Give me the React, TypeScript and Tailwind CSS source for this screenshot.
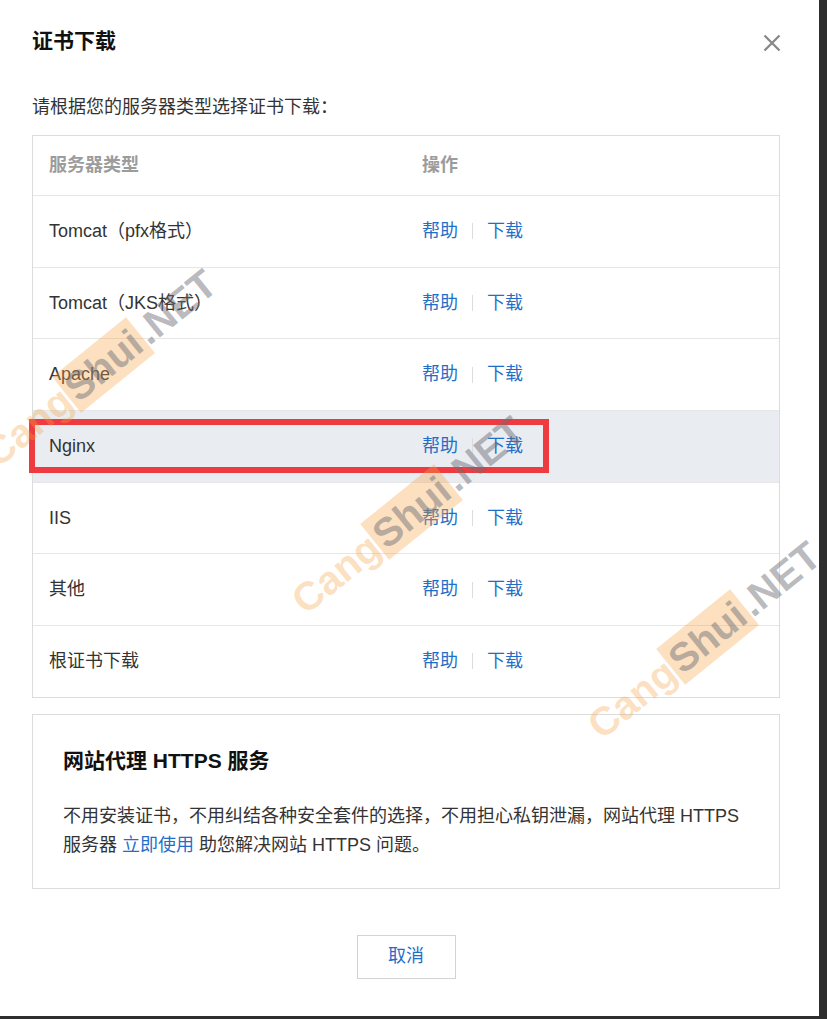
import React from 'react'

const servers = [
  'Tomcat（pfx格式）',
  'Tomcat（JKS格式）',
  'Apache',
  'Nginx',
  'IIS',
  '其他',
  '根证书下载'
]

// semi-transparent site watermark laid over the dialog
const Watermark: React.FC<{ className: string }> = ({ className }) => (
  <div
    className={`pointer-events-none absolute z-10 flex -translate-x-1/2 -translate-y-1/2 -rotate-[39deg] items-center whitespace-nowrap font-['Liberation_Sans',sans-serif] text-[40px] leading-none font-bold ${className}`}
  >
    <span className="text-[rgba(245,160,60,0.33)]">Cang</span>
    <span className="bg-[rgba(245,165,70,0.34)] px-[4px] py-[3px] text-[rgba(110,110,120,0.48)]">Shui</span>
    <span className="text-[rgba(110,110,120,0.48)]">.NET</span>
  </div>
)

const Actions = () => (
  <div className="flex items-center text-[#1f6fc9]">
    <span>帮助</span>
    <span className="mx-[14px] h-[16px] w-px bg-[#dcdcdc]" />
    <span>下载</span>
  </div>
)

export default function App() {
  return (
    <div className="flex h-[1019px] w-[827px] bg-[#2e2e2e]">
      <div className="relative h-[1016px] w-[819px] overflow-hidden bg-white pr-[39px] pl-8 font-['Liberation_Sans','Noto_Sans_CJK_SC',sans-serif] text-[#333]">
        {/* Header */}
        <div className="flex items-center justify-between pt-[27px]">
          <h2 className="text-[21px] leading-[28px] font-bold text-[#111]">证书下载</h2>
          <button className="mt-1 -mr-px">
            <svg width="18" height="18" viewBox="0 0 18 18" fill="none">
              <path d="M1.5 1.5L16.5 16.5M16.5 1.5L1.5 16.5" stroke="#888" strokeWidth="2.3" />
            </svg>
          </button>
        </div>

        <p className="mt-[39px] text-[18px] leading-[26px]">请根据您的服务器类型选择证书下载：</p>

        {/* Server table */}
        <div className="mt-[15px] border border-[#dcdcdc] text-[18px]">
          <div className="grid h-[59px] grid-cols-[373px_1fr] items-center pl-4 font-bold text-[#9c9c9c]">
            <span>服务器类型</span>
            <span>操作</span>
          </div>
          {servers.map(name => (
            <div
              key={name}
              className={`relative grid h-[71.7px] grid-cols-[373px_1fr] items-center border-t border-[#e6e6e6] pl-4 ${
                name === 'Nginx' ? 'bg-[#e9ecf0]' : ''
              }`}
            >
              <span>{name}</span>
              <Actions />
              {name === 'Nginx' && (
                <div className="absolute top-[8px] -left-[4px] h-[54px] w-[520px] border-[6px] border-[#ee3b3f]" />
              )}
            </div>
          ))}
        </div>

        {/* HTTPS proxy card */}
        <div className="mt-[16px] border border-[#dcdcdc] pt-[34px] pr-[24px] pb-[28px] pl-[30px]">
          <h3 className="text-[21px] leading-[24px] font-bold text-[#111]">网站代理 HTTPS 服务</h3>
          <p className="mt-[29px] text-[18px] leading-[29px]">
            不用安装证书，不用纠结各种安全套件的选择，不用担心私钥泄漏，网站代理 HTTPS 服务器{' '}
            <a className="text-[#1f6fc9]">立即使用</a> 助您解决网站 HTTPS 问题。
          </p>
        </div>

        <div className="mt-[46px] flex justify-center">
          <button className="h-[44px] w-[99px] border border-[#d3d3d3] text-[18px] text-[#1f6fc9]">取消</button>
        </div>

        <Watermark className="top-[368px] left-[100px]" />
        <Watermark className="top-[515px] left-[408px]" />
        <Watermark className="top-[640px] left-[704px]" />
      </div>
    </div>
  )
}
